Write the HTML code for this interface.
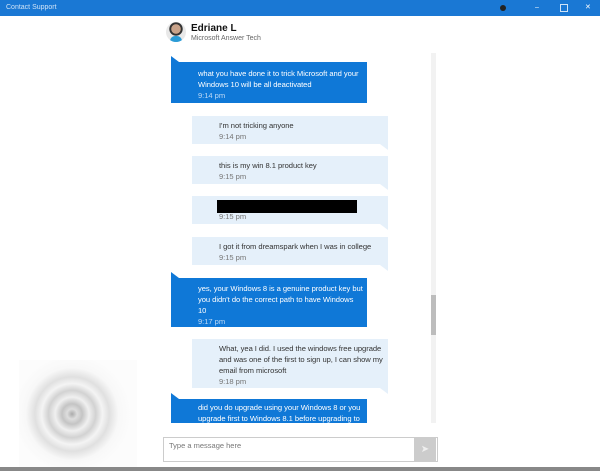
<!DOCTYPE html><html><head><style>
body{margin:0;width:600px;height:471px;overflow:hidden;background:#fff;font-family:"Liberation Sans",sans-serif;position:relative}
.tb{position:absolute;left:0;top:0;width:600px;height:16px;background:#1a78d4;color:#cfe3f7;font-size:7px;line-height:16px}
.b{position:absolute;font-size:7.6px;line-height:11px;white-space:nowrap;letter-spacing:-0.05px}
.bl{background:#0f78d7;color:#fff;left:171px;width:196px}
.bl .t{color:#bcd8f5}
.lt{background:#e5f0fa;color:#333;left:192px;width:196px}
.lt .t{color:#777}
.bl:before{content:"";position:absolute;left:0;top:-6px;border-left:8px solid #0f78d7;border-top:6px solid transparent}
.lt:after{content:"";position:absolute;right:0;bottom:-6px;border-right:8px solid #e5f0fa;border-bottom:6px solid transparent}
.bl .in{padding:6px 0 0 27px}
.lt .in{padding:4px 0 0 27px}
</style></head><body>
<div class="tb"><span style="margin-left:6px">Contact Support</span>
<span style="position:absolute;left:500px;top:5px;width:6px;height:6px;border-radius:50%;background:#222"></span>
<span style="position:absolute;left:535px;color:#fff">–</span>
<span style="position:absolute;left:560px;top:4px;width:6px;height:6px;border:1px solid #cfe3f7"></span>
<span style="position:absolute;left:585px;color:#fff">✕</span></div>
<div style="position:absolute;left:166px;top:22px;width:20px;height:20px;border-radius:50%;background:radial-gradient(circle at 50% 35%,#c9a38a 0 28%,#333 30% 40%,#e8e8e8 42%);overflow:hidden"><div style="position:absolute;left:4px;top:14px;width:12px;height:8px;border-radius:5px 5px 0 0;background:#2a9bd6"></div></div>
<div style="position:absolute;left:191px;top:23px;font-size:10px;font-weight:bold;color:#111">Edriane L</div>
<div style="position:absolute;left:191px;top:35px;font-size:7px;color:#666">Microsoft Answer Tech</div>
<div style="position:absolute;left:431px;top:53px;width:5px;height:370px;background:#f2f2f2"></div>
<div style="position:absolute;left:431px;top:295px;width:5px;height:40px;background:#bdbdbd"></div>
<div class="b bl" style="top:62px;height:41px"><div class="in">what you have done it to trick Microsoft and your<br>Windows 10 will be all deactivated<br><span class="t">9:14 pm</span></div></div>
<div class="b lt" style="top:116px;height:28px"><div class="in">I'm not tricking anyone<br><span class="t">9:14 pm</span></div></div>
<div class="b lt" style="top:156px;height:28px"><div class="in">this is my win 8.1 product key<br><span class="t">9:15 pm</span></div></div>
<div class="b lt" style="top:196px;height:28px"><div style="position:absolute;left:25px;top:4px;width:140px;height:13px;background:#000"></div><div class="in" style="padding-top:15px"><span class="t">9:15 pm</span></div></div>
<div class="b lt" style="top:237px;height:28px"><div class="in">I got it from dreamspark when I was in college<br><span class="t">9:15 pm</span></div></div>
<div class="b bl" style="top:278px;height:49px"><div class="in" style="padding-top:5px">yes, your Windows 8 is a genuine product key but<br>you didn't do the correct path to have Windows<br>10<br><span class="t">9:17 pm</span></div></div>
<div class="b lt" style="top:339px;height:49px"><div class="in">What, yea I did. I used the windows free upgrade<br>and was one of the first to sign up, I can show my<br>email from microsoft<br><span class="t">9:18 pm</span></div></div>
<div class="b bl" style="top:399px;height:24px"><div class="in" style="padding-top:3px">did you do upgrade using your Windows 8 or you<br>upgrade first to Windows 8.1 before upgrading to</div></div>
<div style="position:absolute;left:163px;top:437px;width:273px;height:23px;border:1px solid #ccc;font-size:7.5px;color:#777;line-height:16px;text-indent:5px">Type a message here</div>
<div style="position:absolute;left:414px;top:438px;width:22px;height:23px;background:#ccc;color:#eee;font-size:10px;text-align:center;line-height:23px">➤</div>
<div style="position:absolute;left:19px;top:360px;width:118px;height:108px;background:radial-gradient(circle at 45% 50%,#aaa 0,#ddd 6%,#c4c4c4 12%,#f0f0f0 20%,#d2d2d2 28%,#f4f4f4 36%,#e0e0e0 44%,#f8f8f8 55%,#fcfcfc 70%)"></div>
<div style="position:absolute;left:0;top:467px;width:600px;height:4px;background:#888"></div>
</body></html>
